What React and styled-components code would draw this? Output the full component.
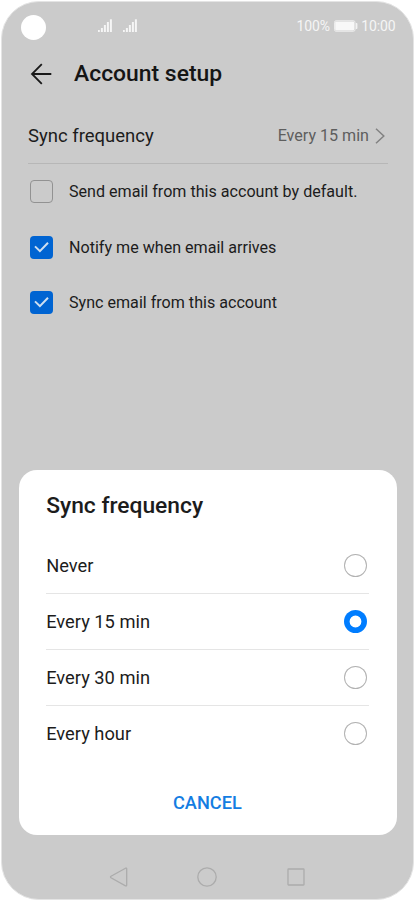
import { useState } from "react";
import styled, { createGlobalStyle } from "styled-components";

const GlobalStyle = createGlobalStyle`
  * {
    box-sizing: border-box;
  }
  body {
    margin: 0;
    background: #fff;
    font-family: Roboto, "Liberation Sans", sans-serif;
    color: #1c1c1c;
  }
  button {
    font: inherit;
    border: none;
    background: none;
    padding: 0;
  }
  svg {
    display: block;
  }
`;

const Phone = styled.div`
  position: relative;
  display: flex;
  flex-direction: column;
  width: 413px;
  height: 899px;
  margin: 1px 0 0 1px;
  border: 1px solid #e4e4e4;
  border-radius: 38px;
  background: #cbcbcb;
`;

const StatusBar = styled.div`
  display: flex;
  align-items: center;
  height: 48px;
  padding: 0 17.5px 0 19px;
  font-size: 14px;
  color: #f5f5f5;
`;

const Camera = styled.div`
  width: 25px;
  height: 25px;
  margin: 3px 0 0 -0.5px;
  border-radius: 50%;
  background: #fff;
`;

const Signals = styled.div`
  display: flex;
  gap: 11px;
  margin: -1px auto 0 52.5px;
`;

const StatusText = styled.span`
  line-height: 16px;
  letter-spacing: -0.1px;
`;

const BatteryIcon = styled.svg`
  margin: 0 3.2px 0 4px;
`;

const Header = styled.div`
  display: flex;
  align-items: center;
  gap: 21px;
  height: 48px;
  padding-left: 27px;
`;

const Title = styled.h1`
  margin: 0;
  font-size: 22.9px;
  font-weight: 500;
  line-height: 28px;
  color: #151515;
`;

const FrequencyRow = styled.div`
  display: flex;
  align-items: center;
  height: 66px;
  margin: 0 25px 0 26px;
  padding: 10px 3px 0 0;
  border-bottom: 1px solid #b7b7b7;
`;

const Label = styled.span`
  flex: 1;
  line-height: 22px;
  font-size: 18.5px;
`;

const Current = styled.span`
  margin-right: 6px;
  font-size: 16.1px;
  color: #5e5e5e;
`;

const CheckRow = styled.div`
  display: flex;
  align-items: center;
  gap: 16px;
  height: 55.4px;
  padding-left: 28px;
  font-size: 16.1px;
`;

const Box = styled.button`
  display: flex;
  align-items: center;
  justify-content: center;
  width: 23px;
  height: 23px;
  border: ${(props) => (props.checked ? "none" : "1px solid #929292")};
  border-radius: 4px;
  background: ${(props) => (props.checked ? "#0064d2" : "transparent")};
`;

const Sheet = styled.div`
  position: absolute;
  left: 16.5px;
  right: 16.4px;
  top: 468px;
  height: 364.5px;
  padding: 0 28px 0 27.7px;
  border-radius: 18px;
  background: #fff;
  display: flex;
  flex-direction: column;
`;

const SheetTitle = styled.h2`
  margin: 0;
  height: 68px;
  line-height: 72px;
  font-size: 22.8px;
  font-weight: 500;
`;

const Option = styled.div`
  display: flex;
  align-items: center;
  justify-content: space-between;
  height: 55.95px;
  padding-right: 2px;
  font-size: 18.3px;
  line-height: 23px;
  border-bottom: ${(props) => (props.last ? "none" : "1px solid #e5e5e5")};
`;

const Radio = styled.button`
  width: 23px;
  height: 23px;
  border-radius: 50%;
  box-shadow: inset 0 0 0
    ${(props) => (props.checked ? "5.6px #007dff" : "1px #b2b2b2")};
`;

const Cancel = styled.button`
  height: 30px;
  margin-top: 26px;
  font-size: 18.2px;
  font-weight: 500;
  color: #147de2;
`;

const NavBar = styled.div`
  display: flex;
  align-items: center;
  justify-content: space-between;
  height: 20px;
  margin: auto 108.5px 12.5px 106.5px;
`;

const Signal = () => (
  <svg width="14" height="14" viewBox="0 0 14 14" fill="#f6f6f6">
    <rect x="0" y="11" width="1.8" height="2" />
    <rect x="2.9" y="9" width="2" height="4" />
    <rect x="5.9" y="6" width="2" height="7" />
    <rect x="8.9" y="3" width="2" height="10" />
    <rect x="11.9" y="0.3" width="2" height="12.7" />
  </svg>
);

const Battery = () => (
  <BatteryIcon width="24" height="12" viewBox="0 0 24 12">
    <rect x="0.5" y="0.7" width="20.5" height="10.6" rx="1.6" fill="none" stroke="#ececec" />
    <rect x="1.2" y="1.6" width="19" height="8.8" rx="0.8" fill="#f8f8f8" />
    <path d="M21.8 3h.8a.8.8 0 0 1 .8.8v4.4a.8.8 0 0 1-.8.8h-.8z" fill="#f2f2f2" />
  </BatteryIcon>
);

const options = ["Never", "Every 15 min", "Every 30 min", "Every hour"];

const settings = [
  { text: "Send email from this account by default.", checked: false },
  { text: "Notify me when email arrives", checked: true },
  { text: "Sync email from this account", checked: true },
];

const App = () => {
  const [selected, setSelected] = useState("Every 15 min");

  return (
    <>
      <GlobalStyle />
      <Phone>
        <StatusBar>
          <Camera />
          <Signals>
            <Signal />
            <Signal />
          </Signals>
          <StatusText>100%</StatusText>
          <Battery />
          <StatusText>10:00</StatusText>
        </StatusBar>
        <Header>
          <svg width="24" height="24" viewBox="0 0 24 24" fill="none" stroke="#191919" strokeWidth="1.8">
            <path d="M22.3 12H3M12.8 2.2 3 12l9.8 9.8" />
          </svg>
          <Title>Account setup</Title>
        </Header>
        <FrequencyRow>
          <Label>Sync frequency</Label>
          <Current>{selected}</Current>
          <svg width="10" height="16" viewBox="0 0 10 16" fill="none" stroke="#828282" strokeWidth="1.5">
            <path d="m1 .8 7.8 7.2L1 15.2" />
          </svg>
        </FrequencyRow>
        {settings.map(({ text, checked }) => (
          <CheckRow key={text}>
            <Box checked={checked} aria-label={text}>
              {checked && (
                <svg width="15" height="12" viewBox="0 0 15 12" fill="none" stroke="#cfdff0" strokeWidth="2">
                  <path d="m1 5.4 4.9 4.7 8.1-8.4" />
                </svg>
              )}
            </Box>
            {text}
          </CheckRow>
        ))}
        <NavBar>
          <svg width="19" height="20" viewBox="0 0 19 20" fill="none" stroke="#acacac" strokeWidth="1.3">
            <path d="M16.5 1.2 2 9.3q-1 .7 0 1.4l14.5 8.1q1.2.5 1.2-.8V2q0-1.3-1.2-.8z" />
          </svg>
          <svg width="20" height="20" viewBox="0 0 20 20" fill="none" stroke="#acacac" strokeWidth="1.3">
            <circle cx="10" cy="10" r="9.2" />
          </svg>
          <svg width="18" height="18" viewBox="0 0 18 18" fill="none" stroke="#acacac" strokeWidth="1.3">
            <rect x="1" y="1" width="16" height="16" rx="0.5" />
          </svg>
        </NavBar>
        <Sheet>
          <SheetTitle>Sync frequency</SheetTitle>
          {options.map((option, i) => (
            <Option key={option} last={i === options.length - 1}>
              {option}
              <Radio
                checked={option === selected}
                aria-label={option}
                onClick={() => setSelected(option)}
              />
            </Option>
          ))}
          <Cancel>CANCEL</Cancel>
        </Sheet>
      </Phone>
    </>
  );
};

export default App;
